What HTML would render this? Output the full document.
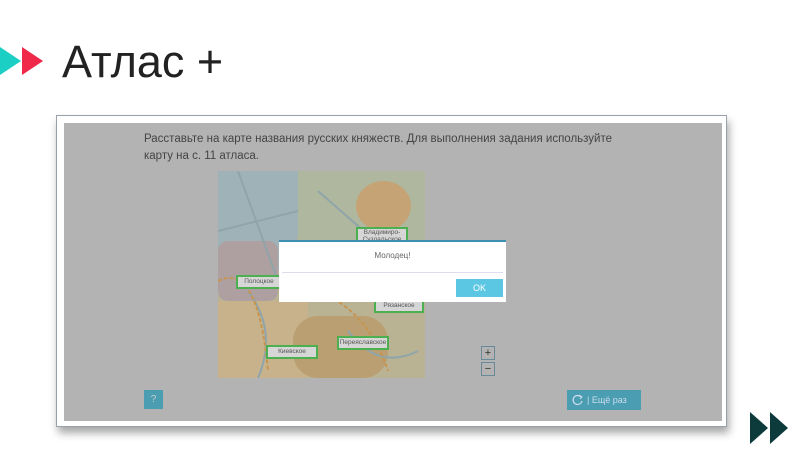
<!DOCTYPE html>
<html><head><meta charset="utf-8"><style>
body{margin:0;width:800px;height:450px;background:#fff;position:relative;overflow:hidden;font-family:"Liberation Sans",sans-serif}
.a{position:absolute}
.lbl{position:absolute;background:#d6d6d6;border:2px solid #4caf50;font-size:6.5px;color:#555;text-align:center;line-height:10px;height:10px}
</style></head><body>
<svg class="a" style="left:0;top:44px" width="48" height="36"><polygon points="0,3 21,17 0,31" fill="#1ccfc4"/><polygon points="22,3 43,17 22,31" fill="#f0284a"/></svg>
<div class="a" style="left:62px;top:36px;font-size:45px;color:#222;line-height:52px">Атлас +</div>
<div class="a" style="left:56px;top:115px;width:671px;height:312px;background:#fff;border:1px solid #9aa0a8;box-sizing:border-box;box-shadow:2px 6px 8px rgba(0,0,0,.35)"></div>
<div class="a" style="left:64px;top:123px;width:658px;height:298px;background:#b3b3b3"></div>
<div class="a" style="left:144px;top:131px;font-size:11.5px;color:#444;line-height:17px;width:480px">Расставьте на карте названия русских княжеств. Для выполнения задания используйте карту на с. 11 атласа.</div>
<div class="a" style="left:218px;top:171px;width:207px;height:207px;background:#b9b394;overflow:hidden">
 <div class="a" style="left:0;top:0;width:80px;height:110px;background:#9fb2b8;border-radius:0 0 50px 0"></div>
 <div class="a" style="left:80px;top:0;width:127px;height:90px;background:#afb79e"></div>
 <div class="a" style="left:138px;top:10px;width:55px;height:50px;background:#c6a374;border-radius:50%"></div>
 <div class="a" style="left:0;top:70px;width:60px;height:60px;background:#ae9fa0;border-radius:10px"></div>
 <div class="a" style="left:0;top:130px;width:90px;height:77px;background:#c7b28c"></div>
 <div class="a" style="left:75px;top:145px;width:95px;height:62px;background:#b99f72;border-radius:25px"></div>
 <svg class="a" style="left:0;top:0" width="207" height="207"><path d="M0,60 L80,40 M20,0 L60,110 M100,20 L180,90 M30,120 Q60,160 40,207 M130,160 Q160,200 200,180" stroke="#8fa5aa" stroke-width="2" fill="none"/><path d="M0,110 Q40,90 50,200 M100,120 Q150,140 170,200" stroke="#c79550" stroke-width="2" fill="none" stroke-dasharray="4 2"/></svg>
</div>
<div class="lbl" style="left:356px;top:227px;width:48px;height:14px;line-height:7px">Владимиро-Суздальское</div>
<div class="lbl" style="left:236px;top:275px;width:42px">Полоцкое</div>
<div class="lbl" style="left:374px;top:299px;width:46px">Рязанское</div>
<div class="lbl" style="left:337px;top:336px;width:48px">Переяславское</div>
<div class="lbl" style="left:266px;top:345px;width:48px">Киевское</div>
<div class="a" style="left:279px;top:240px;width:227px;height:62px;background:#fff;border-top:2px solid #3b8fb0;box-sizing:border-box"></div>
<div class="a" style="left:279px;top:251px;width:227px;text-align:center;font-size:8px;color:#666">Молодец!</div>
<div class="a" style="left:282px;top:272px;width:221px;height:1px;background:#dde"></div>
<div class="a" style="left:456px;top:279px;width:47px;height:18px;background:#5bc7e3;color:#fff;font-size:9px;text-align:center;line-height:18px">OK</div>
<div class="a" style="left:481px;top:346px;width:14px;height:14px;border:1px solid #6a8a9a;box-sizing:border-box;font-size:11px;text-align:center;line-height:12px;color:#333">+</div>
<div class="a" style="left:481px;top:362px;width:14px;height:14px;border:1px solid #6a8a9a;box-sizing:border-box;font-size:11px;text-align:center;line-height:12px;color:#333">−</div>
<div class="a" style="left:144px;top:390px;width:19px;height:19px;background:#4b9db2;color:#ccc;font-size:10px;text-align:center;line-height:19px">?</div>
<div class="a" style="left:567px;top:390px;width:74px;height:20px;background:#4b9db2;color:#cde;font-size:9px;line-height:20px"><svg class="a" style="left:5px;top:4px" width="12" height="12"><path d="M9,3 A4.5,4.5 0 1 0 10,7" stroke="#cde" stroke-width="1.2" fill="none"/><path d="M7,1 L10,3 L8,5" stroke="#cde" stroke-width="1" fill="none"/></svg><span class="a" style="left:20px">| Ещё раз</span></div>
<svg class="a" style="left:748px;top:410px" width="48" height="36"><polygon points="2,2 20,18 2,34" fill="#0d3b3b"/><polygon points="22,2 40,18 22,34" fill="#0d3b3b"/></svg>
</body></html>
